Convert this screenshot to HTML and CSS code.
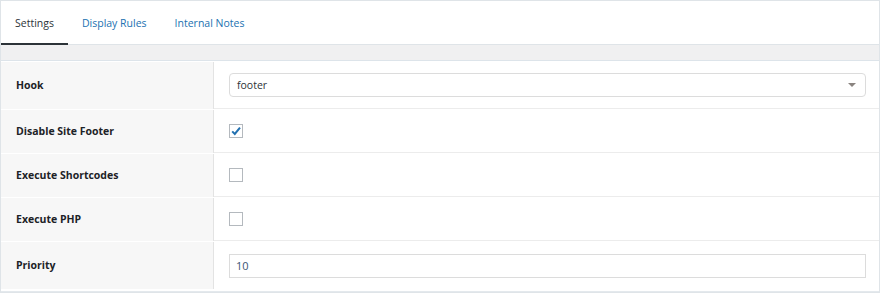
FILE: index.html
```html
<!DOCTYPE html>
<html>
<head>
<meta charset="utf-8">
<link rel="stylesheet" href="styles.css">
</head>
<body>
<div class="frame">
  <nav class="tabs">
    <a class="tab active">Settings</a>
    <a class="tab">Display Rules</a>
    <a class="tab">Internal Notes</a>
  </nav>
  <div class="band"></div>
  <div class="panel">
    <div class="row first">
      <div class="label">Hook</div>
      <div class="value">
        <div class="select"><span>footer</span><i class="caret"></i></div>
      </div>
    </div>
    <div class="row">
      <div class="label">Disable Site Footer</div>
      <div class="value">
        <span class="check on"><svg viewBox="0 0 14 14" width="14" height="14"><path d="M3.2 7.4 L5.8 10 L11 3.6" fill="none" stroke="#2271b1" stroke-width="2"/></svg></span>
      </div>
    </div>
    <div class="row">
      <div class="label">Execute Shortcodes</div>
      <div class="value"><span class="check"></span></div>
    </div>
    <div class="row">
      <div class="label">Execute PHP</div>
      <div class="value"><span class="check"></span></div>
    </div>
    <div class="row last">
      <div class="label">Priority</div>
      <div class="value"><div class="input">10</div></div>
    </div>
  </div>
</div>
</body>
</html>
```

FILE: styles.css
```css
* { box-sizing: border-box; }
html, body { margin: 0; padding: 0; background: #fff; }
body { font-family: "Open Sans", "Noto Sans", sans-serif; font-size: 10.5px; color: #1d2327; }
.frame {
  width: 880px;
  height: 293px;
  border: 1px solid #dfe4e8;
  display: flex;
  flex-direction: column;
  overflow: hidden;
}
.tabs {
  display: flex;
  height: 44px;
  border-bottom: 1px solid #dfe4e8;
  background: #fff;
}
.tab {
  padding: 0 14px;
  display: flex;
  align-items: center;
  color: #2271b1;
  border-bottom: 2px solid transparent;
  margin-bottom: -1px;
  padding-top: 1px;
}
.tab.active { color: #2c3338; border-bottom-color: #2c3338; }
.band { height: 16px; background: #f0f0f1; border-bottom: 1px solid #dde4ea; }
.panel { flex: 1; display: flex; flex-direction: column; border-bottom: 1px solid #e4e9ed; }
.row { display: flex; height: 44px; padding-bottom: 1px; }
.row.first { height: 49px; padding-top: 1px; }
.row.last { height: 48px; padding-bottom: 1px; }
.label {
  width: 213px;
  background: #f7f7f7;
  border-right: 1px solid #e3e3e3;
  display: flex;
  align-items: center;
  padding-left: 15px;
  padding-bottom: 1px;
  font-weight: 700;
  color: #1d2327;
}
.value {
  flex: 1;
  border-bottom: 1px solid #ececec;
  display: flex;
  align-items: center;
  padding: 0 13px 0 15px;
}
.row.last .value { border-bottom: 0; }
.select {
  flex: 1;
  height: 24px;
  border: 1px solid #dcdcdc;
  border-radius: 4px;
  display: flex;
  align-items: center;
  justify-content: space-between;
  padding: 0 9px 0 7px;
  color: #2c3338;
}
.caret {
  width: 0; height: 0;
  border-left: 4px solid transparent;
  border-right: 4px solid transparent;
  border-top: 4px solid #8a8480;
}
.check {
  width: 14px; height: 14px;
  border: 1px solid #b4b9be;
  background: #fff;
  display: inline-flex;
}
.check svg { display: block; margin: -1px; }
.input {
  flex: 1;
  height: 24px;
  border: 1px solid #dcdcdc;
  display: flex;
  align-items: center;
  padding: 0 6px;
  color: #3a5573;
  font-size: 11px;
}
```
